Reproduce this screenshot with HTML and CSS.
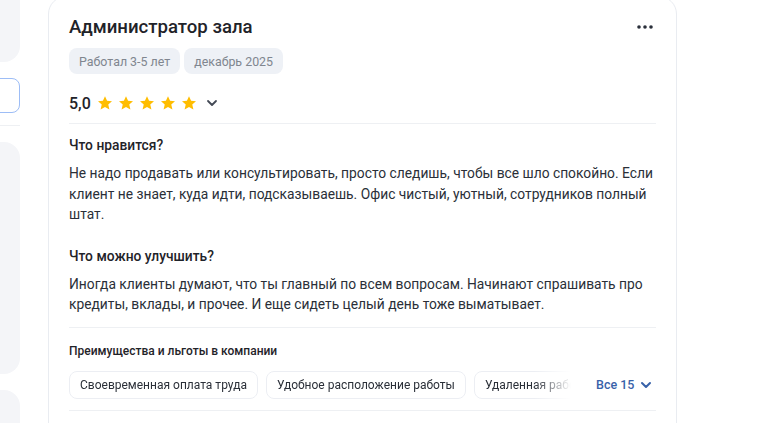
FILE: index.html
```html
<!DOCTYPE html>
<html lang="ru">
<head>
<meta charset="utf-8">
<title>Отзыв</title>
<link rel="stylesheet" href="styles.css">
</head>
<body>
<div class="page">
  <aside class="side">
    <div class="side-top"></div>
    <div class="side-input"></div>
    <div class="side-line"></div>
    <div class="side-block"></div>
    <div class="side-block side-block-2"></div>
  </aside>
  <article class="card">
    <div class="card-head">
      <h2 class="title">Администратор зала</h2>
      <button class="more" aria-label="Ещё">
        <svg width="16" height="4" viewBox="0 0 16 4"><circle cx="2" cy="2" r="1.8"/><circle cx="8" cy="2" r="1.8"/><circle cx="14" cy="2" r="1.8"/></svg>
      </button>
    </div>
    <div class="tags">
      <span class="tag">Работал 3-5 лет</span>
      <span class="tag">декабрь 2025</span>
    </div>
    <div class="rating">
      <span class="score">5,0</span>
      <span class="stars">
        <svg class="star" viewBox="0 0 24 24"><path d="M12 1.8l3.1 6.9 7.4.7-5.6 5 1.7 7.4L12 17.9l-6.6 3.9 1.7-7.4-5.6-5 7.4-.7z"/></svg>
        <svg class="star" viewBox="0 0 24 24"><path d="M12 1.8l3.1 6.9 7.4.7-5.6 5 1.7 7.4L12 17.9l-6.6 3.9 1.7-7.4-5.6-5 7.4-.7z"/></svg>
        <svg class="star" viewBox="0 0 24 24"><path d="M12 1.8l3.1 6.9 7.4.7-5.6 5 1.7 7.4L12 17.9l-6.6 3.9 1.7-7.4-5.6-5 7.4-.7z"/></svg>
        <svg class="star" viewBox="0 0 24 24"><path d="M12 1.8l3.1 6.9 7.4.7-5.6 5 1.7 7.4L12 17.9l-6.6 3.9 1.7-7.4-5.6-5 7.4-.7z"/></svg>
        <svg class="star" viewBox="0 0 24 24"><path d="M12 1.8l3.1 6.9 7.4.7-5.6 5 1.7 7.4L12 17.9l-6.6 3.9 1.7-7.4-5.6-5 7.4-.7z"/></svg>
      </span>
      <svg class="chev" width="12" height="8" viewBox="0 0 12 8"><path d="M2 2l4 4 4-4" fill="none" stroke="currentColor" stroke-width="1.8" stroke-linecap="round" stroke-linejoin="round"/></svg>
    </div>
    <div class="divider divider-1"></div>
    <section class="block">
      <h3 class="block-title">Что нравится?</h3>
      <p class="block-text">Не надо продавать или консультировать, просто следишь, чтобы все шло спокойно. Если клиент не знает, куда идти, подсказываешь. Офис чистый, уютный, сотрудников полный штат.</p>
    </section>
    <section class="block block-2">
      <h3 class="block-title">Что можно улучшить?</h3>
      <p class="block-text">Иногда клиенты думают, что ты главный по всем вопросам. Начинают спрашивать про кредиты, вклады, и прочее. И еще сидеть целый день тоже выматывает.</p>
    </section>
    <div class="divider divider-2"></div>
    <h3 class="benefits-title">Преимущества и льготы в компании</h3>
    <div class="benefits">
      <div class="chips">
        <span class="chip">Своевременная оплата труда</span>
        <span class="chip">Удобное расположение работы</span>
        <span class="chip">Удаленная работа</span>
      </div>
      <button class="all">Все 15
        <svg width="12" height="8" viewBox="0 0 12 8"><path d="M2 2l4 4 4-4" fill="none" stroke="currentColor" stroke-width="2" stroke-linecap="round" stroke-linejoin="round"/></svg>
      </button>
    </div>
    <div class="divider divider-3"></div>
  </article>
</div>
</body>
</html>
```

FILE: styles.css
```css
* { box-sizing: border-box; }
html, body { margin: 0; padding: 0; background: #ffffff; }
body {
  font-family: Roboto, "Noto Sans", Arial, sans-serif;
  color: #1f2329;
  width: 768px;
  height: 423px;
  overflow: hidden;
}
.page {
  display: flex;
  gap: 28px;
  margin-top: -4px;
}
.side {
  width: 20px;
  flex: none;
  display: flex;
  flex-direction: column;
  overflow: hidden;
}
.side-top {
  height: 66px;
  margin-left: -200px;
  background: #f4f5f8;
  border-bottom-right-radius: 16px;
}
.side-input {
  height: 35px;
  margin-top: 16px;
  margin-left: -200px;
  border: 1px solid #9dbdf6;
  border-radius: 8px;
}
.side-line {
  height: 1px;
  margin-top: 12px;
  margin-left: -200px;
  background: #eef0f3;
}
.side-block {
  height: 232px;
  margin-top: 16px;
  margin-left: -200px;
  background: #f4f5f8;
  border-radius: 16px;
}
.side-block-2 {
  height: 100px;
  margin-top: 16px;
}
.card {
  width: 629px;
  flex: none;
  border: 1px solid #e9ecf1;
  border-radius: 18px;
  padding: 18px 20px 40px 20px;
  min-height: 460px;
}
.card-head {
  display: flex;
  align-items: center;
  justify-content: space-between;
}
.title {
  margin: 0;
  font-size: 18.6px;
  line-height: 24px;
  font-weight: 500;
  color: #1f2329;
}
.more {
  border: 0;
  background: none;
  padding: 0;
  margin-right: 3px;
  display: flex;
  fill: #2a2f3a;
}
.tags {
  display: flex;
  gap: 4px;
  margin-top: 9px;
}
.tag {
  height: 26px;
  padding: 0 10px;
  display: flex;
  align-items: center;
  background: #eef1f6;
  border-radius: 8px;
  font-size: 12.4px;
  color: #80868f;
}
.rating {
  display: flex;
  align-items: center;
  height: 24px;
  margin-top: 17px;
}
.score {
  font-size: 16px;
  font-weight: 500;
  color: #1f2329;
}
.stars {
  display: flex;
  gap: 5px;
  margin-left: 6px;
}
.star {
  width: 16px;
  height: 16px;
  fill: #ffbd00;
}
.chev {
  margin-left: 9px;
  color: #434955;
}
.divider {
  height: 1px;
  background: #eef0f3;
}
.divider-1 { margin-top: 8px; }
.block { margin-top: 11px; }
.block-2 { margin-top: 21px; }
.block-title {
  margin: 0;
  font-size: 13.8px;
  line-height: 20px;
  font-weight: 500;
  color: #1f2329;
}
.block-text {
  margin: 8px 0 0;
  font-size: 13.8px;
  line-height: 20.5px;
  color: #2a2f38;
}
.divider-2 { margin-top: 12px; }
.benefits-title {
  margin: 13px 0 0;
  font-size: 12px;
  line-height: 20px;
  font-weight: 500;
  color: #1f2329;
}
.benefits {
  display: flex;
  align-items: center;
  margin-top: 10px;
}
.chips {
  display: flex;
  gap: 8px;
  width: 506px;
  overflow: hidden;
  flex: none;
  -webkit-mask-image: linear-gradient(to right, #000 465px, transparent 502px);
  mask-image: linear-gradient(to right, #000 465px, transparent 502px);
}
.chip {
  flex: none;
  height: 28px;
  padding: 0 10px;
  display: flex;
  align-items: center;
  border: 1px solid #eceef3;
  border-radius: 8px;
  font-size: 12px;
  color: #2a2f38;
  white-space: nowrap;
}
.all {
  flex: none;
  white-space: nowrap;
  margin-left: 21px;
  border: 0;
  background: none;
  padding: 0;
  display: flex;
  align-items: center;
  gap: 6px;
  font-family: inherit;
  font-size: 12.5px;
  font-weight: 500;
  color: #3862a9;
}
.divider-3 { margin-top: 11px; }
```
